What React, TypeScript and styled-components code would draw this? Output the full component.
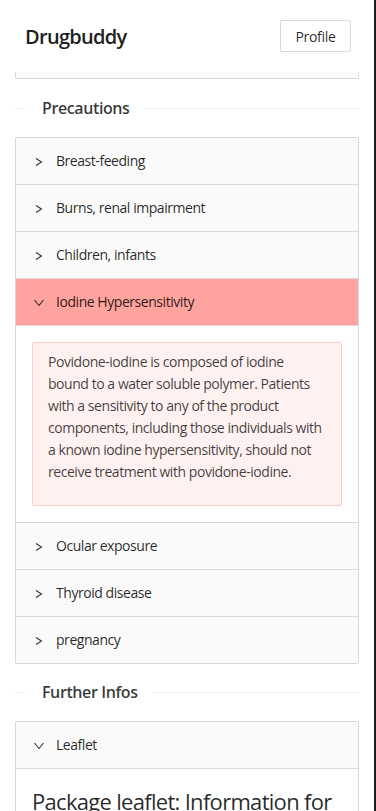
import React from "react";
import styled, { createGlobalStyle } from "styled-components";

const GlobalStyle = createGlobalStyle`
  body {
    margin: 0;
    background: #ffffff;
    font-family: "Open Sans", "Noto Sans", sans-serif;
    color: rgba(0, 0, 0, 0.85);
  }
`;

const precautions = [
  "Breast-feeding",
  "Burns, renal impairment",
  "Children, infants",
  "Iodine Hypersensitivity",
  "Ocular exposure",
  "Thyroid disease",
  "pregnancy",
];

const Arrow = ({ open }: { open?: boolean }) => (
  <ArrowSvg viewBox="0 0 12 12">
    <polyline points={open ? "1.5,3 6,8.5 10.5,3" : "3,2.5 8.5,6 3,9.5"} />
  </ArrowSvg>
);

const App = () => {
  return (
    <Page>
      <GlobalStyle />
      <Header>
        <Logo>Drugbuddy</Logo>
        <ProfileButton>Profile</ProfileButton>
      </Header>
      <Main>
        <CardStub />
        <Divider>
          <DividerText>Precautions</DividerText>
        </Divider>
        <Collapse>
          {precautions.map((name) => {
            const open = name === "Iodine Hypersensitivity";
            return (
              <Item key={name}>
                <ItemHeader $active={open}>
                  <Arrow open={open} />
                  {name}
                </ItemHeader>
                {open && (
                  <ItemContent>
                    <Alert>
                      <AlertText>
                        Povidone-iodine is composed of iodine bound to a water
                        soluble polymer. Patients with a sensitivity to any of
                        the product components, including those individuals
                        with a known iodine hypersensitivity, should not
                        receive treatment with povidone-iodine.
                      </AlertText>
                    </Alert>
                  </ItemContent>
                )}
              </Item>
            );
          })}
        </Collapse>
        <Divider>
          <DividerText>Further Infos</DividerText>
        </Divider>
        <Collapse>
          <Item>
            <ItemHeader>
              <Arrow open />
              Leaflet
            </ItemHeader>
            <ItemContent>
              <LeafletTitle>Package leaflet: Information for the user</LeafletTitle>
            </ItemContent>
          </Item>
        </Collapse>
      </Main>
    </Page>
  );
};

const Page = styled.div`
  width: 374px;
  height: 811px;
  overflow: hidden;
  border-right: 2px solid #1c1c1c;
`;

const Header = styled.header`
  height: 72px;
  display: flex;
  align-items: center;
  justify-content: space-between;
  padding: 0 23px 0 25px;
`;

const Logo = styled.div`
  font-size: 20px;
  font-weight: 600;
  color: #1f1f1f;
  letter-spacing: -0.7px;
`;

const ProfileButton = styled.button`
  height: 32px;
  width: 71px;
  padding: 0;
  background: #ffffff;
  border: 1px solid #d9d9d9;
  border-radius: 2px;
  font-family: inherit;
  font-size: 14px;
  letter-spacing: -0.3px;
  color: rgba(0, 0, 0, 0.85);
`;

const Main = styled.main`
  padding: 0 15px;
`;

const CardStub = styled.div`
  height: 6px;
  background: #fafafa;
  border: 1px solid #d9d9d9;
  border-top: none;
  border-radius: 0 0 2px 2px;
`;

const Divider = styled.div`
  display: flex;
  align-items: center;
  height: 24px;
  margin: 17px 0;

  &::before,
  &::after {
    content: "";
    border-top: 1px solid #f0f0f0;
  }
  &::before {
    width: 11px;
  }
  &::after {
    flex: 1;
  }
`;

const DividerText = styled.span`
  padding: 0 16px;
  font-size: 16px;
  font-weight: 600;
  line-height: 24px;
  letter-spacing: -0.4px;
  color: rgba(0, 0, 0, 0.78);
`;

const Collapse = styled.div`
  background: #fafafa;
  border: 1px solid #d9d9d9;
  border-bottom: none;
  border-radius: 2px;
  overflow: hidden;

  & + ${Divider} {
    margin-top: 16px;
  }
`;

const Item = styled.div`
  border-bottom: 1px solid #d9d9d9;
`;

const ItemHeader = styled.div<{ $active?: boolean }>`
  position: relative;
  padding: 12px 16px 12px 40px;
  font-size: 14px;
  line-height: 22px;
  color: rgba(0, 0, 0, 0.85);
  background: ${(p) => (p.$active ? "#ffa39e" : "transparent")};
  letter-spacing: -0.45px;
`;

const ArrowSvg = styled.svg`
  position: absolute;
  left: 16.5px;
  top: 17.5px;
  width: 12px;
  height: 12px;
  fill: none;
  stroke: rgba(0, 0, 0, 0.8);
  stroke-width: 1.1;
`;

const ItemContent = styled.div`
  background: #ffffff;
  border-top: 1px solid #d9d9d9;
  padding: 16px;
`;

const Alert = styled.div`
  background: #fff1f0;
  border: 1px solid #ffccc7;
  border-radius: 2px;
  padding: 8px 15px;
`;

const AlertText = styled.p`
  margin: 0 0 14px;
  font-size: 14px;
  line-height: 22px;
  color: rgba(0, 0, 0, 0.75);
  letter-spacing: -0.45px;
`;

const LeafletTitle = styled.h3`
  margin: 0;
  font-size: 22px;
  font-weight: 500;
  line-height: 32px;
  letter-spacing: -0.7px;
  color: rgba(0, 0, 0, 0.85);
`;

export default App;
